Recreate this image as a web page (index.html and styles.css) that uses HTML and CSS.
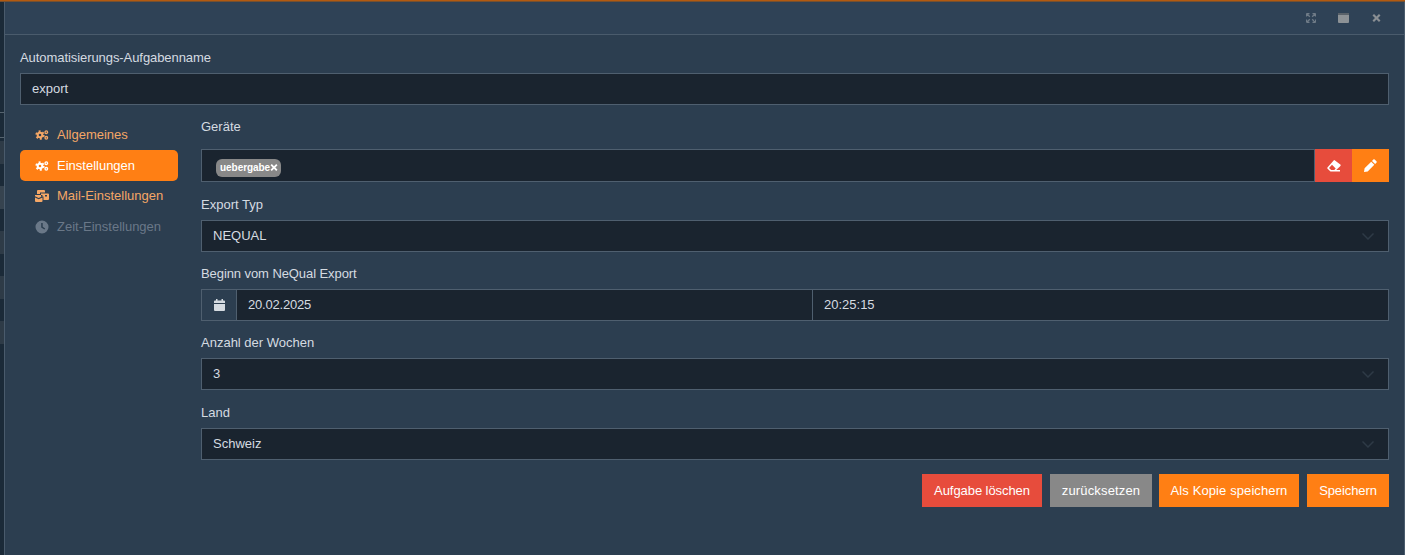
FILE: index.html
```html
<!DOCTYPE html>
<html lang="de">
<head>
<meta charset="utf-8">
<title>Automatisierungs-Aufgabe</title>
<link rel="stylesheet" href="styles.css">
</head>
<body>
<div class="backdrop">
  <span class="line l1"></span><span class="line l2"></span>
  <span class="strip s1"></span><span class="strip s2"></span><span class="strip s3"></span><span class="strip s4"></span><span class="strip s5"></span>
</div>
<div class="topline"></div>
<div class="dialog">
  <div class="titlebar">
    <button class="winbtn" aria-label="Vollbild"><svg width="10" height="10" viewBox="0 0 10 10"><path d="M.5 .5h3M.5 .5v3M.5 .5 3.800 3.800M9.500 .5h-3M9.500 .5v3M9.500 .5 6.200 3.800M.5 9.500h3M.5 9.500v-3M.5 9.500 3.800 6.200M9.500 9.500h-3M9.500 9.500v-3M9.500 9.500 6.200 6.200"/></svg></button>
    <button class="winbtn" aria-label="Maximieren"><svg class="winmax" width="11" height="10" viewBox="0 0 11 10"><path class="wintop" d="M0 0h11v2H0z"/><path d="M0 2h11v7a1 1 0 0 1-1 1H1a1 1 0 0 1-1-1z"/></svg></button>
    <button class="winbtn" aria-label="Schließen"><svg class="winx" width="9" height="8" viewBox="0 0 9 9"><path d="M1.700 0 4.500 2.800 7.300 0 9 1.700 6.200 4.500 9 7.300 7.300 9 4.500 6.200 1.700 9 0 7.300 2.800 4.500 0 1.700z"/></svg></button>
  </div>
  <div class="body">
    <label class="label name-label">Automatisierungs-Aufgabenname</label>
    <div class="field name-field"><span class="value">export</span></div>
    <div class="columns">
      <nav class="side">
        <a class="item">
          <svg class="ico" width="13" height="10" viewBox="0 0 13 10"><circle class="gear-teeth" cx="4.500" cy="5" r="3.800"/><circle class="gear-core" cx="4.500" cy="5" r="2.300"/><circle class="gear-small" cx="10.800" cy="2.200" r="1.300"/><circle class="gear-small" cx="10.800" cy="7.800" r="1.300"/></svg>
          Allgemeines</a>
        <a class="item active">
          <svg class="ico" width="13" height="10" viewBox="0 0 13 10"><circle class="gear-teeth" cx="4.500" cy="5" r="3.800"/><circle class="gear-core" cx="4.500" cy="5" r="2.300"/><circle class="gear-small" cx="10.800" cy="2.200" r="1.300"/><circle class="gear-small" cx="10.800" cy="7.800" r="1.300"/></svg>
          Einstellungen</a>
        <a class="item mail">
          <svg class="ico" width="14" height="12" viewBox="0 0 14 12"><path fill-rule="evenodd" d="M3 0h6a1 1 0 0 1 1 1v1.500H5V4H2V1a1 1 0 0 1 1-1zM6 3.500h7a1 1 0 0 1 1 1V9a1 1 0 0 1-1 1H8.500V6.500H6zM10 5v1.500h2V5zM0 5h7.500v1.200L3.700 8 0 6.200zM0 7.500 3.700 9.300 7.500 7.500V11a1 1 0 0 1-1 1H1a1 1 0 0 1-1-1z"/></svg>
          Mail-Einstellungen</a>
        <a class="item disabled">
          <svg class="ico" width="14" height="14" viewBox="0 0 14 14"><path fill-rule="evenodd" d="M7 .5a6.500 6.500 0 1 1 0 13 6.500 6.500 0 0 1 0-13zM6.200 3v4.500l3.200 2 .8-1.100L7.700 6.800V3z"/></svg>
          Zeit-Einstellungen</a>
      </nav>
      <div class="form">
        <label class="label l-geraete">Geräte</label>
        <div class="group g-geraete">
          <div class="field tags"><span class="tag">uebergabe<svg width="8" height="7" viewBox="0 0 9 9"><path d="M1.700 0 4.500 2.800 7.300 0 9 1.700 6.200 4.500 9 7.300 7.300 9 4.500 6.200 1.700 9 0 7.300 2.800 4.500 0 1.700z"/></svg></span></div>
          <button class="addon red" aria-label="Leeren"><svg width="14" height="12" viewBox="0 0 14 12"><path fill-rule="evenodd" d="M8 .4 13.300 4.600a1 1 0 0 1 .1 1.400L9.200 10H13v1.400H3.500L.6 8.800a1 1 0 0 1-.1-1.400L6.600.5A1 1 0 0 1 8 .4zM5 4.700 2 8l2.200 2h3.100l1.400-1.500z"/></svg></button>
          <button class="addon orange" aria-label="Bearbeiten"><svg width="13" height="13" viewBox="0 0 13 13"><path d="M9.300.6a1 1 0 0 1 1.400 0l1.700 1.700a1 1 0 0 1 0 1.400l-1.300 1.300-3.100-3.100zM7.200 2.700l3.100 3.100-6.600 6.600L0 13l.6-3.700z"/></svg></button>
        </div>
        <label class="label l-typ">Export Typ</label>
        <div class="field select"><span class="value">NEQUAL</span><svg class="chev" width="12" height="7" viewBox="0 0 12 7"><path d="M.5.500 6 6 11.500.500" fill="none"/></svg></div>
        <label class="label l-next tight">Beginn vom NeQual Export</label>
        <div class="group">
          <div class="cal"><svg width="11" height="12" viewBox="0 0 11 12"><path fill-rule="evenodd" d="M2 0h1.500v1.500h4V0H9v1.500h1a1 1 0 0 1 1 1V4H0V2.500a1 1 0 0 1 1-1h1zM0 5h11v6a1 1 0 0 1-1 1H1a1 1 0 0 1-1-1z"/></svg></div>
          <div class="field half date"><span class="value">20.02.2025</span></div>
          <div class="field half time"><span class="value">20:25:15</span></div>
        </div>
        <label class="label l-next">Anzahl der Wochen</label>
        <div class="field select"><span class="value">3</span><svg class="chev" width="12" height="7" viewBox="0 0 12 7"><path d="M.5.500 6 6 11.500.500" fill="none"/></svg></div>
        <label class="label l-land">Land</label>
        <div class="field select"><span class="value">Schweiz</span><svg class="chev" width="12" height="7" viewBox="0 0 12 7"><path d="M.5.500 6 6 11.500.500" fill="none"/></svg></div>
        <div class="actions">
          <button class="btn red b-delete">Aufgabe löschen</button>
          <button class="btn gray b-reset">zurücksetzen</button>
          <button class="btn orange b-copy">Als Kopie speichern</button>
          <button class="btn orange b-save">Speichern</button>
        </div>
      </div>
    </div>
  </div>
</div>
</body>
</html>
```
FILE: styles.css
```css
* { box-sizing: border-box; }
html, body { margin: 0; height: 100%; overflow: hidden; }
body {
  position: relative;
  background: #1b2a38;
  font-family: "Liberation Sans", Arial, sans-serif;
  font-size: 13px;
  color: #d5dbe1;
}
.backdrop { position: absolute; left: 0; top: 0; width: 4px; height: 100%; }
.strip { position: absolute; left: 0; width: 4px; background: #2e3b47; }
.line { position: absolute; left: 0; width: 4px; height: 1px; background: #56646f; }
.l1 { top: 112px; }
.l2 { top: 137px; }
.s1 { top: 141px; height: 23px; }
.s2 { top: 186px; height: 23px; background: #36434f; }
.s3 { top: 231px; height: 23px; }
.s4 { top: 276px; height: 23px; }
.s5 { top: 321px; height: 23px; }
.topline {
  position: absolute;
  left: 0; right: 0; top: 0;
  height: 2px;
  background: linear-gradient(#b35a10 50%, #77502f 50%);
}
.dialog {
  position: absolute;
  left: 4px; right: 0; top: 2px; bottom: 0;
  background: #2c3e50;
  border-left: 1px solid #4a5b6c;
  border-right: 1px solid #4a5b6c;
}
.titlebar {
  height: 33px;
  border-bottom: 1px solid #4a5b6c;
  display: flex;
  justify-content: flex-end;
  align-items: center;
  padding-right: 11px;
  background: #2f4256;
}
.winbtn {
  width: 33px; height: 20px;
  padding: 0; border: 0; background: none;
  display: flex; align-items: center; justify-content: center;
}
.winbtn svg { fill: none; stroke: #6f7b87; stroke-width: 1.300; }
.winbtn .winmax { fill: #8d9296; stroke: none; }
.winbtn .winmax .wintop { fill: #5a626a; }
.winbtn .winx { fill: #8a8f94; stroke: none; }
.body { padding: 14px 15px 0 15px; }
.label { display: block; line-height: 18px; height: 16px; font-size: 13px; color: #d5dbe1; }
.name-label { margin-bottom: 8px; letter-spacing: -.07px; }
.tight { letter-spacing: -.08px; }
.field {
  height: 32px;
  background: #1a242f;
  border: 1px solid #4f5f6f;
  display: flex;
  align-items: center;
  padding: 0 11px 2px;
  font-size: 13px;
  color: #d5dbe1;
}
.name-field { width: 100%; }
.columns { display: flex; margin-top: 14px; }
.side { width: 158px; margin-right: 23px; flex: none; }
.item {
  display: flex; align-items: center;
  height: 31px;
  padding-left: 15px;
  border-radius: 5px;
  color: #f5a766;
  font-size: 13px;
}
.item.mail { height: 29px; margin-bottom: 1px; }
.item .ico { margin-right: 8px; fill: currentColor; flex: none; }
.ico { width: 14px; }
.gear-teeth { fill: none; stroke: currentColor; stroke-width: 1.700; stroke-dasharray: 2 2; }
.gear-core { fill: none; stroke: currentColor; stroke-width: 2; }
.gear-small { fill: none; stroke: currentColor; stroke-width: 1.300; }
.item.active { background: #ff7f14; color: #fff; }
.item.disabled { color: #6a7888; }
.form { flex: 1; min-width: 0; }
.l-geraete { margin: 0 0 14px; line-height: 16px; }
.group { display: flex; height: 32px; }
.g-geraete { height: 33px; }
.g-geraete .field { height: 33px; }
.tags { flex: 1; padding: 4px 14px 0; }
.tag {
  display: inline-flex; align-items: center;
  height: 18px;
  width: 65px;
  padding: 0 3px 0 4px;
  border-radius: 6px;
  background: #888;
  color: #fff;
  font-size: 10px;
  font-weight: 700;
  letter-spacing: -.05px;
  justify-content: space-between;
}
.tag svg { fill: #fff; flex: none; }
.addon {
  width: 37px; height: 33px; border: 0; padding: 0;
  display: flex; align-items: center; justify-content: center;
}
.addon svg { fill: #fff; }
.red { background: #e74c3c; }
.orange { background: #ff7f14; }
.gray { background: #888; }
.l-typ { margin: 14px 0 8px; }
.l-next { margin: 13px 0 8px; }
.l-land { margin: 14px 0 8px; }
.select { justify-content: space-between; padding-right: 14px; }
.chev { stroke: #2e3a46; stroke-width: 1.5; margin-top: 2px; }
.cal {
  width: 35px; flex: none;
  border: 1px solid #4f5f6f; border-right: 0;
  background: #2c3e50;
  display: flex; align-items: center; justify-content: center;
}
.cal svg { fill: #d5dbe1; }
.half { flex: 1; }
.date .value { letter-spacing: -.2px; }
.time { border-left: 0; }
.actions { display: flex; justify-content: flex-end; gap: 8px; margin-top: 14px; }
.btn {
  height: 33px; padding: 0; border: 0;
  color: #fff;
  font-family: "Liberation Sans", Arial, sans-serif;
  font-size: 13px;
}
.b-delete { width: 120px; letter-spacing: -.07px; }
.b-reset { width: 102px; letter-spacing: .15px; margin-right: -1px; }
.b-copy { width: 140px; letter-spacing: .1px; }
.b-save { width: 82px; letter-spacing: -.1px; }
```
